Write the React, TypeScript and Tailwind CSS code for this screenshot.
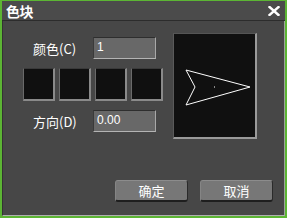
import React from 'react';

const cjk = { fontFamily: '"Noto Sans CJK SC", "DejaVu Sans", sans-serif' };
const latin = { fontFamily: '"Liberation Sans", "DejaVu Sans", sans-serif' };

function Field({ label, value }: { label: string; value: string }) {
  return (
    <div className="flex items-center h-[22px]">
      <div className="w-[70px] pl-[10px] text-[13px] text-white leading-none" style={cjk}>
        {label}
      </div>
      <div
        className="w-[63px] h-[22px] bg-[#686868] border-t border-l border-t-[#2e2e2e] border-l-[#3a3a3a] border-r border-b border-r-[#a8a8a8] border-b-[#b4b4b4] flex items-center pl-[3px] pb-[2px] text-[12px] text-white"
        style={latin}
      >
        {value}
      </div>
    </div>
  );
}

function Swatch() {
  return (
    <div className="w-[32px] h-[33px] bg-[#101010] border-t border-l border-t-[#3a3a3a] border-l-[#6a6a6a] border-r-2 border-b-2 border-r-[#8a8a8a] border-b-[#8a8a8a]" />
  );
}

function Button({ children }: { children: React.ReactNode }) {
  return (
    <button
      className="w-[73px] h-[22px] rounded-[3px] bg-[#777777] border-t border-l border-t-[#8c8c8c] border-l-[#858585] border-r border-b-2 border-r-[#2a2a2a] border-b-[#1e1e1e] text-white text-[13px] leading-none flex items-center justify-center"
      style={cjk}
    >
      {children}
    </button>
  );
}

export default function App() {
  return (
    <div className="w-[287px] h-[218px] bg-[#5cb534] pt-px pl-[2px] pr-[2px] pb-[2px] flex flex-col">
      {/* title bar */}
      <div className="h-[20px] bg-[#4b4b4b] border-b border-b-[#2c2c2c] flex items-center justify-between pl-[4px] pr-[5px]">
        <span className="text-white text-[14px] font-bold leading-none tracking-[-0.5px]" style={cjk}>
          色块
        </span>
        <svg width="12" height="10" viewBox="0 0 12 10" className="mt-[1px]">
          <path d="M1.5 1 L10.5 9 M10.5 1 L1.5 9" stroke="#ffffff" strokeWidth="2.4" strokeLinecap="square" />
        </svg>
      </div>

      {/* body */}
      <div className="flex-1 bg-[#474747] border-l border-l-[#333333] border-r border-r-[#a0a0a0] border-b border-b-[#b0b0b0] flex flex-col">
        <div className="flex pl-[20px] pt-[12px]">
          <div className="w-[140px] mt-[4px] flex flex-col">
            <Field label="颜色(C)" value="1" />
            <div className="flex gap-[4px] mt-[9px]">
              <Swatch />
              <Swatch />
              <Swatch />
              <Swatch />
            </div>
            <div className="mt-[9px]">
              <Field label="方向(D)" value="0.00" />
            </div>
          </div>
          <div className="ml-[10px] w-[84px] h-[106px] bg-[#101010] border-t border-l border-t-[#555555] border-l-[#5a5a5a] border-r-2 border-b-2 border-r-[#9a9a9a] border-b-[#9a9a9a]">
            <svg width="81" height="103" viewBox="0 0 81 103">
              <polygon
                points="12,36 76,53 12,71 21,53"
                fill="none"
                stroke="#ffffff"
                strokeWidth="1"
              />
              <rect x="40" y="52.5" width="1" height="1" fill="#ffffff" />
            </svg>
          </div>
        </div>
        <div className="flex-1 flex items-end justify-end gap-[12px] pr-[11px] pb-[13px]">
          <Button>确定</Button>
          <Button>取消</Button>
        </div>
      </div>
    </div>
  );
}
